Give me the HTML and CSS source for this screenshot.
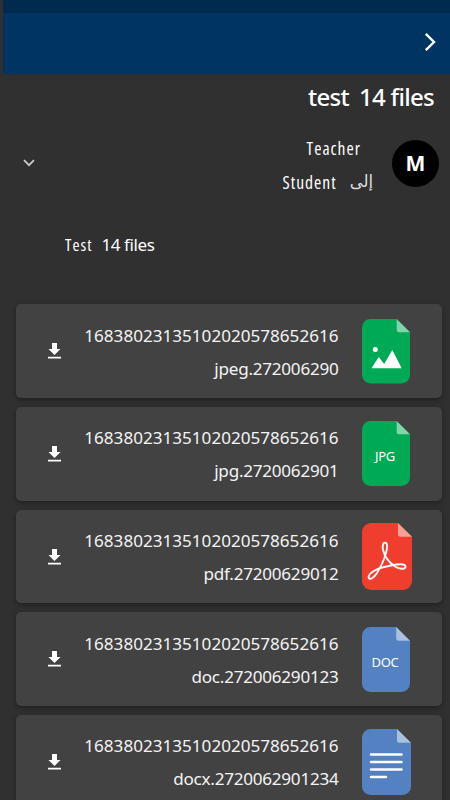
FILE: index.html
```html
<!DOCTYPE html>
<html lang="en">
<head>
    <meta charset="UTF-8">
    <meta name="viewport" content="width=device-width, initial-scale=1.0">
    <title>test 14 files</title>
    <link rel="stylesheet" href="styles.css">
</head>
<body>
    <div class="statusbar"></div>
    <header class="topbar">
        <svg class="back" viewBox="0 0 12 20"><path d="M1.8 1.8 10 10l-8.200 8.200"/></svg>
    </header>

    <h1>test <span>14 files</span></h1>

    <!-- Sender -->
    <div class="sender">
        <svg class="expand" viewBox="0 0 12 8"><path d="M1 1.200 6 6.200l5-5"/></svg>
        <div class="names">
            <p class="from">Teacher</p>
            <p class="to"><span class="student">Student</span> <span class="arabic" lang="ar">إلى</span></p>
        </div>
        <div class="avatar">M</div>
    </div>

    <p class="message"><span class="narrow">Test</span> <span>14 files</span></p>

    <!-- Attachments -->
    <div class="files">
        <div class="card">
            <svg class="download" viewBox="0 0 13 16"><path d="M4 0h5v6h3.500L6.500 12 .5 6H4zM0 13.700h13v1.900H0z"/></svg>
            <p class="filename">16838023135102020578652616<br><span>jpeg.272006290</span></p>
            <svg class="icon" viewBox="0 0 48 65">
                <path class="green" d="M8.500 0H34.700L48 13.300V56a8.500 8.500 0 0 1-8.500 8.500h-31A8.500 8.500 0 0 1 0 56v-47.500A8.500 8.500 0 0 1 8.500 0z"/>
                <path class="fold" d="M34.700 0 48 13.300H37a2.300 2.300 0 0 1-2.300-2.300z"/>
                <circle class="white" cx="13.300" cy="30.600" r="2.500"/>
                <path class="white" d="M9.500 49.300 16.700 38l5.500 7 8.100-14 9.400 18.300z"/>
            </svg>
        </div>

        <div class="card">
            <svg class="download" viewBox="0 0 13 16"><path d="M4 0h5v6h3.500L6.500 12 .5 6H4zM0 13.700h13v1.900H0z"/></svg>
            <p class="filename">16838023135102020578652616<br><span>jpg.2720062901</span></p>
            <svg class="icon" viewBox="0 0 48 65">
                <path class="green" d="M8.500 0H34.700L48 13.300V56.500a8.500 8.500 0 0 1-8.500 8.500h-31A8.500 8.500 0 0 1 0 56.500v-48A8.500 8.500 0 0 1 8.500 0z"/>
                <path class="fold" d="M34.700 0 48 13.300H37a2.300 2.300 0 0 1-2.300-2.300z"/>
                <text x="23" y="40">JPG</text>
            </svg>
        </div>

        <div class="card">
            <svg class="download" viewBox="0 0 13 16"><path d="M4 0h5v6h3.500L6.500 12 .5 6H4zM0 13.700h13v1.900H0z"/></svg>
            <p class="filename">16838023135102020578652616<br><span>pdf.27200629012</span></p>
            <svg class="icon pdf" viewBox="0 0 50 67">
                <path class="red" d="M9 0H36L50 13.700V58a9 9 0 0 1-9 9H9a9 9 0 0 1-9-9V9a9 9 0 0 1 9-9z"/>
                <path class="fold" d="M36 0 50 13.700H38.300A2.300 2.300 0 0 1 36 11.400z"/>
                <path class="swirl" d="M23 19.600C20.700 19.700 20.200 23.500 21.200 27.500C22.800 34 28 40 33 43.500C37 46.300 43.500 46.800 43.600 43.600C43.500 40.500 36 41 30 42.300C24.500 43.500 19 44.500 15 46.400C9.500 49 5.800 52.500 6.800 55C8.200 57.300 12 54.500 15 50C19 43.700 22.500 35.500 24.300 29C25.700 23.500 25.300 19.500 23 19.600z"/>
            </svg>
        </div>

        <div class="card">
            <svg class="download" viewBox="0 0 13 16"><path d="M4 0h5v6h3.500L6.500 12 .5 6H4zM0 13.700h13v1.900H0z"/></svg>
            <p class="filename">16838023135102020578652616<br><span>doc.272006290123</span></p>
            <svg class="icon" viewBox="0 0 48 65">
                <path class="blue" d="M8.500 0H34.200L48 13.700V56.500a8.500 8.500 0 0 1-8.500 8.500h-31A8.500 8.500 0 0 1 0 56.500v-48A8.500 8.500 0 0 1 8.500 0z"/>
                <path class="fold" d="M34.200 0 48 13.700H36.500a2.300 2.300 0 0 1-2.300-2.300z"/>
                <text x="23" y="40">DOC</text>
            </svg>
        </div>

        <div class="card">
            <svg class="download" viewBox="0 0 13 16"><path d="M4 0h5v6h3.500L6.500 12 .5 6H4zM0 13.700h13v1.900H0z"/></svg>
            <p class="filename">16838023135102020578652616<br><span>docx.2720062901234</span></p>
            <svg class="icon docx" viewBox="0 0 49 66">
                <path class="blue" d="M8.500 0H35L49 13.700V57.500a8.500 8.500 0 0 1-8.500 8.500h-32A8.500 8.500 0 0 1 0 57.500v-49A8.500 8.500 0 0 1 8.500 0z"/>
                <path class="fold" d="M35 0 49 13.700H37.300A2.300 2.300 0 0 1 35 11.400z"/>
                <path class="lines" d="M9 25.500h30.500M9 33h30.500M9 40.500h30.500M9 48h15"/>
            </svg>
        </div>
    </div>
</body>
</html>
```
FILE: styles.css
```css
body {
    margin: 0;
    height: 800px;
    overflow: hidden;
    background-color: #303030;
    color: #fff;
    font-family: "Noto Sans", "Open Sans", sans-serif;
}

h1, p {
    margin: 0;
    font-weight: normal;
}

svg {
    display: block;
    flex-shrink: 0;
}

.statusbar {
    height: 12.500px;
    margin-left: 3px;
    background-color: #002b4f;
}

.topbar {
    display: flex;
    justify-content: flex-end;
    align-items: center;
    height: 61.500px;
    margin-left: 3px;
    padding: 0 14px 3px 0;
    box-sizing: border-box;
    background-color: #003462;
}

.back {
    width: 12px;
    height: 20px;
    fill: none;
    stroke: #fff;
    stroke-width: 2.400;
}

h1 {
    display: flex;
    justify-content: flex-end;
    gap: 10px;
    height: 47px;
    padding-right: 16px;
    font-size: 24px;
    font-weight: 500;
    letter-spacing: -0.700px;
    line-height: 46px;
}

/* Sender */
.sender {
    display: flex;
    height: 84px;
    margin-top: 11px;
    padding-right: 11px;
}

.expand {
    width: 12px;
    height: 8px;
    margin: 27px 0 0 23px;
    fill: none;
    stroke: #ccc;
    stroke-width: 1.700;
}

.names {
    flex: 1;
    margin-top: -1px;
    text-align: right;
    font-size: 17.500px;
    line-height: 34px;
}

.from, .student, .narrow {
    font-family: "Open Sans", sans-serif;
    font-stretch: 75%;
    letter-spacing: 1px;
}

.from {
    padding-right: 31px;
}

.to {
    display: flex;
    justify-content: flex-end;
    gap: 13px;
    padding-right: 19px;
}

.arabic {
    font-family: "DejaVu Sans", sans-serif;
    font-size: 16.500px;
    color: #ddd;
}

.avatar {
    width: 47px;
    height: 47px;
    margin-top: 8px;
    border-radius: 50%;
    background-color: #000;
    font-size: 21px;
    font-weight: bold;
    line-height: 46px;
    text-align: center;
}

.message {
    display: flex;
    gap: 9px;
    height: 87px;
    padding: 12px 0 0 65px;
    box-sizing: border-box;
    font-size: 17px;
    letter-spacing: -0.400px;
    line-height: 34px;
}

.files {
    padding-top: 1.400px;
}

/* Attachments */
.card {
    display: flex;
    align-items: center;
    height: 93.700px;
    margin: 0 8px 9px 16px;
    padding: 0 32px;
    box-sizing: border-box;
    border-radius: 5px;
    background-color: #424242;
    box-shadow: 0 2px 5px rgba(0, 0, 0, 0.35);
}

.download {
    width: 13px;
    height: 16px;
    fill: #fff;
}

.filename {
    flex: 1;
    padding: 1px 23.500px 0 0;
    font-size: 17.100px;
    line-height: 33px;
    text-align: right;
    color: #f4f4f4;
}

.filename span {
    letter-spacing: -0.250px;
}

.icon {
    width: 48px;
    height: 65px;
}

.pdf {
    width: 50px;
    height: 67px;
    margin: 0 -1.500px 0 -0.500px;
}

.docx {
    width: 49px;
    height: 66px;
    margin-right: -1px;
}

.green {
    fill: #00aa55;
}

.red {
    fill: #ef3e2d;
}

.blue {
    fill: #5381c1;
}

.white {
    fill: #fff;
}

.fold {
    fill: #fff;
    fill-opacity: 0.5;
}

.icon text {
    fill: #fff;
    font-size: 13px;
    letter-spacing: -0.300px;
    text-anchor: middle;
}

.swirl {
    fill: none;
    stroke: #fff;
    stroke-width: 1.900;
}

.lines {
    fill: none;
    stroke: #fff;
    stroke-width: 2.500;
    stroke-linecap: round;
}
```
